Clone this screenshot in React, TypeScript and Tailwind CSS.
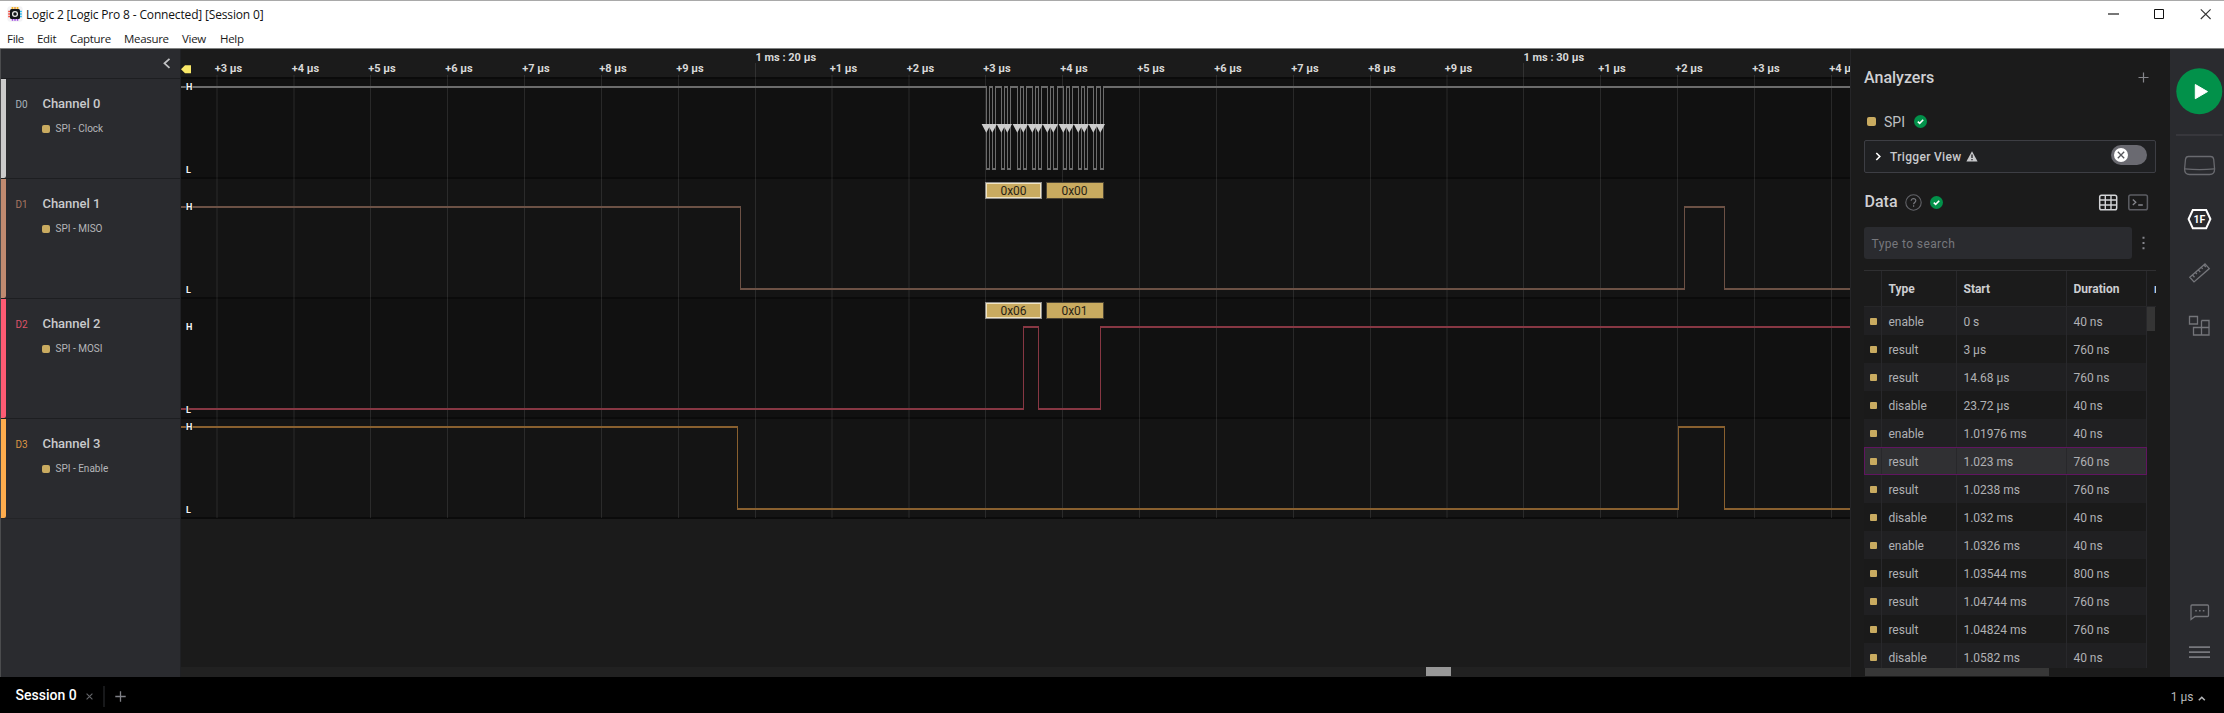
import React from "react";

const MENU = [
  { label: "File", w: "w-[30px]" },
  { label: "Edit", w: "w-[33px]" },
  { label: "Capture", w: "w-[54px]" },
  { label: "Measure", w: "w-[58px]" },
  { label: "View", w: "w-[38px]" },
  { label: "Help", w: "w-[40px]" },
];

const CHANNELS = [
  { id: "D0", name: "Channel 0", role: "SPI - Clock", h: "h-[100px]", bar: "bg-[#cbcbcb]", text: "text-[#a9b4bb]" },
  { id: "D1", name: "Channel 1", role: "SPI - MISO", h: "h-[120px]", bar: "bg-[#c08a70]", text: "text-[#a87661]" },
  { id: "D2", name: "Channel 2", role: "SPI - MOSI", h: "h-[120px]", bar: "bg-[#fd5b73]", text: "text-[#dd5368]" },
  { id: "D3", name: "Channel 3", role: "SPI - Enable", h: "h-[100px]", bar: "bg-[#feac4d]", text: "text-[#dc9545]" },
];

const GRID: { x: number; label: string; major?: boolean }[] = [
  { x: 217, label: "+3 µs" },
  { x: 294, label: "+4 µs" },
  { x: 370.5, label: "+5 µs" },
  { x: 447.5, label: "+6 µs" },
  { x: 524.5, label: "+7 µs" },
  { x: 601.5, label: "+8 µs" },
  { x: 678.5, label: "+9 µs" },
  { x: 755.5, label: "1 ms : 20 µs", major: true },
  { x: 832, label: "+1 µs" },
  { x: 909, label: "+2 µs" },
  { x: 985.5, label: "+3 µs" },
  { x: 1062.5, label: "+4 µs" },
  { x: 1139.5, label: "+5 µs" },
  { x: 1216.5, label: "+6 µs" },
  { x: 1293.5, label: "+7 µs" },
  { x: 1370.5, label: "+8 µs" },
  { x: 1447, label: "+9 µs" },
  { x: 1523.5, label: "1 ms : 30 µs", major: true },
  { x: 1600.5, label: "+1 µs" },
  { x: 1677.5, label: "+2 µs" },
  { x: 1754.5, label: "+3 µs" },
  { x: 1831.5, label: "+4 µs" },
];

const CLOCK = [
  16, 19, 22, 25, 31, 34, 37, 40, 47, 50, 53, 56, 62, 65, 68, 71, 77, 80, 83, 87, 93, 96, 99, 102, 108, 111, 114, 117,
  123, 126, 130, 133,
].map((v) => 970.5 + v);

const SIGNALS = [
  { high: 87, low: 169, start: true, color: "#6c6c6c", edges: CLOCK },
  { high: 207, low: 289, start: true, color: "#6c5145", edges: [740.5, 1684.5, 1724.5] },
  { high: 327, low: 409, start: false, color: "#873743", edges: [1023.5, 1038.5, 1100.5] },
  { high: 427, low: 509, start: true, color: "#89602f", edges: [737.5, 1678.5, 1724.5] },
];

const FRAMES = [
  { x: 985, y: 182, t: "0x00", sel: true },
  { x: 1046, y: 182, t: "0x00", sel: false },
  { x: 985, y: 302, t: "0x06", sel: true },
  { x: 1046, y: 302, t: "0x01", sel: false },
];

const ROWS = [
  ["enable", "0 s", "40 ns"],
  ["result", "3 µs", "760 ns"],
  ["result", "14.68 µs", "760 ns"],
  ["disable", "23.72 µs", "40 ns"],
  ["enable", "1.01976 ms", "40 ns"],
  ["result", "1.023 ms", "760 ns"],
  ["result", "1.0238 ms", "760 ns"],
  ["disable", "1.032 ms", "40 ns"],
  ["enable", "1.0326 ms", "40 ns"],
  ["result", "1.03544 ms", "800 ns"],
  ["result", "1.04744 ms", "760 ns"],
  ["result", "1.04824 ms", "760 ns"],
  ["disable", "1.0582 ms", "40 ns"],
];
const SELECTED = 5;

function Signal({ high, low, start, color, edges }: (typeof SIGNALS)[number]) {
  const levels: React.ReactNode[] = [];
  let x = 181;
  let up = start;
  [...edges, 1850].forEach((e, i) => {
    const left = i === 0 ? x : x - 0.5;
    const right = i === edges.length ? e : e + 0.5;
    levels.push(<rect key={i} x={left} y={(up ? high : low) - 1} width={right - left} height={2} fill={color} />);
    x = e;
    up = !up;
  });
  return (
    <g>
      {levels}
      {edges.map((e) => (
        <rect key={e} x={e - 0.5} y={high} width={1} height={low - high} fill={color} />
      ))}
    </g>
  );
}

function Plot() {
  return (
    <svg width="1669" height="628" viewBox="181 49 1669 628" className="block" fontFamily="Roboto, sans-serif">
      <rect x="181" y="49" width="1669" height="628" fill="#1b1b1b" />
      <rect x="181" y="78" width="1669" height="100" fill="#111111" />
      <rect x="181" y="178" width="1669" height="120" fill="#141414" />
      <rect x="181" y="298" width="1669" height="120" fill="#111111" />
      <rect x="181" y="418" width="1669" height="100" fill="#141414" />
      {[77, 177, 297, 417, 517].map((y) => (
        <rect key={y} x="181" y={y} width="1669" height="2" fill="#0b0b0b" />
      ))}
      {GRID.map((g) => (
        <rect key={g.x} x={g.x - 0.5} y={g.major ? 63 : 75} width={1} height={g.major ? 455 : 443} fill="#ffffff" fillOpacity={0.1} />
      ))}
      {GRID.map((g) => (
        <text key={g.x} x={g.major ? g.x : g.x - 2.3} y={g.major ? 60.5 : 72} fontSize="11" fontWeight="700" fill="#d8d8d8">
          {g.label}
        </text>
      ))}
      <path d="M181 69.3 L185 65.3 H191 V73.3 H185 Z" fill="#f8e767" />
      {SIGNALS.map((s) => (
        <Signal key={s.high} {...s} />
      ))}
      {CLOCK.filter((_, i) => i % 2 === 0).map((x) => (
        <path key={x} d={`M${x - 4.9} 124 h9.4 l-4.7 8.7 z`} fill="#cccccc" />
      ))}
      {FRAMES.map((f) => (
        <g key={`${f.x}-${f.y}`}>
          <rect x={f.x} y={f.y} width={f.sel ? 57 : 58} height="17" fill={f.sel ? "#8d8d8b" : "#4c4433"} />
          <rect x={f.x + 1} y={f.y + 1} width={f.sel ? 55 : 56} height="15" fill={f.sel ? "#f1e4c4" : "#c9ab60"} />
          {f.sel && <rect x={f.x + 2} y={f.y + 2} width="53" height="13" fill="#c9ab60" />}
          <text x={f.x + 28.5} y={f.y + 13} fontSize="12" textAnchor="middle" fill="#2a2415">
            {f.t}
          </text>
        </g>
      ))}
      {SIGNALS.map((s) => (
        <g key={s.high} fontSize="9" fontWeight="700" fill="#f6f6f6" stroke="#111111" strokeWidth="1.4" paintOrder="stroke">
          <text x="186" y={s.high + 3}>H</text>
          <text x="186" y={s.low + 4}>L</text>
        </g>
      ))}
      <rect x="181" y="667" width="1669" height="10" fill="#212121" />
      <rect x="1426" y="667" width="25" height="9" fill="#979797" />
    </svg>
  );
}

function AppIcon() {
  return (
    <svg width="16" height="16" viewBox="0 0 16 16" className="block">
      <rect x="0.3" y="0.3" width="15.4" height="15.4" rx="3" fill="#f3f3f5" />
      <path d="M5.5 1v3M10.5 1v3" stroke="#f5b51e" strokeWidth="1.8" />
      <path d="M8 1v3" stroke="#e98b2b" strokeWidth="1.4" />
      <path d="M5.5 12v2.7M8 12v2.7M10.5 12v2.7" stroke="#9b3fe0" strokeWidth="1.5" />
      <path d="M1.2 5.5h3M1.2 8h3M1.2 10.5h3" stroke="#ee4a3c" strokeWidth="1.5" />
      <path d="M12 5.5h2.8M12 8h2.8M12 10.5h2.8" stroke="#25b5ea" strokeWidth="1.5" />
      <rect x="3" y="3" width="10" height="10" rx="1.5" fill="#15171c" />
      <circle cx="8" cy="8" r="2.4" fill="none" stroke="#e8e8e8" strokeWidth="1.3" />
    </svg>
  );
}

function Check() {
  return (
    <svg width="13" height="13" viewBox="0 0 13 13" className="block shrink-0">
      <circle cx="6.5" cy="6.5" r="6.5" fill="#02914a" />
      <path d="M3.8 6.6 L5.7 8.4 L9.2 4.8" fill="none" stroke="#fff" strokeWidth="1.6" />
    </svg>
  );
}

function AnalyzerPanel() {
  return (
    <section className="flex w-[320px] shrink-0 flex-col border-l border-[#252527] bg-[#1b1b1b] pl-[13px]">
      <div className="flex h-[57px] w-[284px] items-center justify-between">
        <h2 className="text-[16px] font-medium leading-none text-[#cfd0d3]">Analyzers</h2>
        <svg width="11" height="11" viewBox="0 0 11 11" className="mr-[-1px]">
          <path d="M5.5 0.5v10M0.5 5.5h10" stroke="#85868b" strokeWidth="1.2" />
        </svg>
      </div>
      <div className="flex h-[34px] items-center pb-[3px] pl-[3px]">
        <span className="h-[9px] w-[9px] rounded-[2px] bg-[#c9ab60]" />
        <span className="ml-[8px] w-[30px] text-[14px] leading-none text-[#bfc0c3]">SPI</span>
        <Check />
      </div>
      <div className="flex h-[33px] w-[292px] items-center rounded-[2px] border border-[#3d3e44] bg-[#1f2022] pl-[10px] pr-[8px]">
        <svg width="7" height="9" viewBox="0 0 7 9" className="mr-[8px]">
          <path d="M1.3 1 L4.8 4.5 L1.3 8" fill="none" stroke="#fff" strokeWidth="1.6" />
        </svg>
        <span className="text-[12px] font-medium leading-none tracking-[0.32px] text-[#c8c9cc]">Trigger View</span>
        <svg width="12" height="11" viewBox="0 0 12 11" className="ml-[4.5px]">
          <path d="M6 0.3 L11.6 10.4 H0.4 Z" fill="#c8c9cc" />
          <path d="M6 3.6v3.4M6 7.9v1.4" stroke="#1f2022" strokeWidth="1.3" />
        </svg>
        <span className="mb-[3px] ml-auto flex h-[20px] w-[36px] items-center rounded-full bg-[#6a6a71] pl-[3px]">
          <svg width="14" height="14" viewBox="0 0 14 14">
            <circle cx="7" cy="7" r="7" fill="#fff" />
            <path d="M3.8 3.8 L10.2 10.2 M10.2 3.8 L3.8 10.2" stroke="#55565b" strokeWidth="1.3" />
          </svg>
        </span>
      </div>
      <div className="flex h-[54px] items-center pt-[4px]">
        <h2 className="w-[41px] pl-[0.5px] text-[16px] font-medium leading-none text-[#cfd0d3]">Data</h2>
        <svg width="17" height="17" viewBox="0 0 17 17" className="mr-[7.5px]">
          <circle cx="8.5" cy="8.5" r="7.7" fill="none" stroke="#626368" strokeWidth="1.1" />
          <path d="M6.2 6.8 C6.2 3.8 10.9 3.9 10.8 6.8 C10.7 8.4 8.6 8.5 8.6 10.2 M8.6 11.3v1.4" fill="none" stroke="#77787d" strokeWidth="1.2" />
        </svg>
        <Check />
        <svg width="20" height="17" viewBox="0 0 20 17" className="ml-[155.5px]">
          <rect x="1.7" y="1.2" width="17" height="14.6" rx="1.8" fill="none" stroke="#d2d3d6" strokeWidth="1.5" />
          <path d="M1.5 6h17M1.5 11h17M7.3 1v15M13 1v15" stroke="#d2d3d6" strokeWidth="1.4" />
        </svg>
        <svg width="21" height="17" viewBox="0 0 21 17" className="ml-[10px]">
          <rect x="0.8" y="1" width="18.6" height="14.8" rx="1.8" fill="none" stroke="#5c5d63" strokeWidth="1.5" />
          <path d="M4.8 5.5 L7.8 8.3 L4.8 11 M10.2 11h4.6" fill="none" stroke="#85868c" strokeWidth="1.3" />
        </svg>
      </div>
      <div className="flex h-[32px] items-center">
        <div className="flex h-[32px] w-[268px] items-center rounded-[3px] bg-[#2a2b2f] pl-[7.5px] pt-px text-[12px] tracking-[0.4px] text-[#77787d]">
          Type to search
        </div>
        <svg width="3" height="14" viewBox="0 0 3 14" className="ml-[10px]">
          <path d="M0.5 0.7h2v2h-2zM0.5 6h2v2h-2zM0.5 11.3h2v2h-2z" fill="#85868c" />
        </svg>
      </div>
      <div className="mt-[11px] flex h-[407px] w-[292px] flex-col border-t border-[#2f2f31]">
        <div className="flex h-[36px] shrink-0 overflow-hidden border-b border-[#262628] text-[12px] font-bold text-[#cdced1]">
          <span className="w-[18px] shrink-0 border-r border-[#28282b]" />
          <span className="flex w-[75px] shrink-0 items-center border-r border-[#28282b] pl-[6.5px]">Type</span>
          <span className="flex w-[110px] shrink-0 items-center border-r border-[#28282b] pl-[6.5px]">Start</span>
          <span className="flex w-[80px] shrink-0 items-center border-r border-[#28282b] pl-[6.5px]">Duration</span>
          <span className="flex shrink-0 items-center pl-[7px]">mosi</span>
        </div>
        <div className="flex h-[361px] shrink-0">
          <div className="h-[361px] w-[283px] overflow-hidden">
            {ROWS.map((r, i) => (
              <div
                key={i}
                className={
                  "flex h-[28px] text-[12px] text-[#b0b1b4] " +
                  (i === SELECTED
                    ? "bg-[#303033] outline outline-1 -outline-offset-1 outline-[#601560]"
                    : i % 2 === 0
                      ? "bg-[#202022]"
                      : "bg-[#1a1a1a]")
                }
              >
                <span className="flex w-[18px] items-center border-r border-[#28282b] pl-[6px]">
                  <span className="h-[7px] w-[7px] shrink-0 rounded-[1px] bg-[#c9ab60]" />
                </span>
                <span className="flex w-[75px] items-center border-r border-[#28282b] pl-[6.4px] pt-px">{r[0]}</span>
                <span className="flex w-[110px] items-center border-r border-[#28282b] pl-[6.4px] pt-px">{r[1]}</span>
                <span className="flex w-[80px] items-center border-r border-[#28282b] pl-[6.4px] pt-px">{r[2]}</span>
              </div>
            ))}
          </div>
          <div className="h-[24px] w-[8px] bg-[#353535]" />
        </div>
        <div className="ml-px h-[8px] w-[184px] shrink-0 bg-[#373737]" />
      </div>
    </section>
  );
}

function Rail() {
  return (
    <aside className="h-[628px] w-[54px] shrink-0 bg-[#2a2b2f]">
      <svg width="54" height="628" viewBox="2170 49 54 628" fill="none" stroke="#74757a" strokeWidth="1.3" className="block">
        <circle cx="2199.3" cy="91.3" r="23" fill="#02914a" stroke="none" />
        <path d="M2195.3 84.5 L2207.5 91.6 L2195.3 98.7 Z" fill="#fff" stroke="#fff" strokeWidth="1" strokeLinejoin="round" />
        <path d="M2176 135h46.5" stroke="#3c3d42" strokeWidth="1.6" />
        <path d="M2188.5 156.5h22q2.8 0 3.2 2.8l.9 9.7q0 5.5-5 5.5h-20q-5 0-5-5.5l.9-9.7q.4-2.8 3-2.8z" stroke="#696a6f" />
        <path d="M2185 168.8q14.5 1.6 29.2 0" stroke="#696a6f" />
        <path d="M2192.8 210h13.4l4.2 9.1-4.2 9.1h-13.4l-4.2-9.1z" stroke="#fff" strokeWidth="2" />
        <text x="2199.4" y="223" fontFamily="Roboto, sans-serif" fontSize="10.5" fontWeight="700" fill="#fff" stroke="none" textAnchor="middle">1F</text>
        <path d="M2189.8 277.2 L2205 263.9 L2209.3 268.6 L2194 281.9 Z M2192.5 275l2 2.2M2195.4 272.4l1.5 1.6M2198.3 269.9l2 2.2M2201.2 267.3l1.5 1.6M2204 265l1.8 2" />
        <path d="M2189.5 316.5h8v7.5h-8zM2201.5 320.5h7.5v14.5h-15.5v-7.5h15.5M2201.5 327.5v7.5M2201.5 320.5v7.5" />
        <path d="M2191 619.5 V606 q0-1 1-1 h15.5 q1 0 1 1 v9.5 q0 1-1 1 H2195 Z" />
        <path d="M2195.2 610.7h1.6M2199 610.7h1.6M2202.8 610.7h1.6" strokeWidth="1.6" />
        <path d="M2189 647.2h21M2189 652.2h21M2189 657.2h21" stroke="#77787d" strokeWidth="1.7" />
      </svg>
    </aside>
  );
}

export default function App() {
  return (
    <div className="flex h-[713px] w-[2224px] flex-col overflow-hidden bg-black font-[Roboto,sans-serif]">
      <header className="h-[49px] shrink-0 border-b border-t border-b-[#808282] border-t-[#a9a9a9] bg-white font-['Open_Sans','Noto_Sans',sans-serif] text-[#1a1a1a]">
        <div className="flex h-[29px]">
          <div className="flex flex-1 pl-[7px] pt-[5px]">
            <AppIcon />
            <span className="ml-[3px] mt-[-1px] whitespace-nowrap text-[12px] leading-[20px] tracking-[-0.16px] text-[#111]">
              Logic 2 [Logic Pro 8 - Connected] [Session 0]
            </span>
          </div>
          <svg width="124" height="29" viewBox="2100 1 124 29" fill="none">
            <path d="M2108 14h11" stroke="#777" strokeWidth="2" />
            <path d="M2154.5 9.5h9v9h-9z" stroke="#111" />
            <path d="M2200.8 9.3 L2210.6 19 M2210.6 9.3 L2200.8 19" stroke="#333" strokeWidth="1.1" />
          </svg>
        </div>
        <nav className="flex pl-[7px] text-[11.5px] leading-[17px] tracking-[-0.3px]">
          {MENU.map((m) => (
            <span key={m.label} className={m.w}>{m.label}</span>
          ))}
        </nav>
      </header>
      <main className="flex h-[628px] shrink-0">
        <aside className="flex w-[181px] shrink-0 flex-col border-l border-r border-l-[#4b4c4e] border-r-[#202124] bg-[#2a2b2f]">
          <div className="flex h-[29px] items-center justify-end pr-[9px]">
            <svg width="8" height="11" viewBox="0 0 8 11">
              <path d="M6.5 0.8 L1.5 5.3 L6.5 9.8" fill="none" stroke="#c0c1c3" strokeWidth="1.8" />
            </svg>
          </div>
          {CHANNELS.map((c) => (
            <div key={c.id} className={"flex border-t border-[#1d1e21] " + c.h}>
              <span className={"w-[5px] rounded-br-[2px] " + c.bar} />
              <span className={"w-[36px] pl-[9.5px] pt-[20px] text-[10px] leading-[12px] " + c.text}>{c.id}</span>
              <div>
                <div className="pl-[0.4px] pt-[17px] text-[13px] font-medium leading-[16px] text-[#c9cacc]">{c.name}</div>
                <div className="flex items-center pt-[10px] text-[10px] leading-[13px] text-[#b5b6b9]">
                  <span className="mr-[5.5px] h-[8px] w-[8px] shrink-0 rounded-[2px] bg-[#c9ab60]" />
                  {c.role}
                </div>
              </div>
            </div>
          ))}
          <div className="border-t border-[#232427]" />
        </aside>
        <Plot />
        <AnalyzerPanel />
        <Rail />
      </main>
      <footer className="flex h-[36px] shrink-0 items-center bg-black pl-[15.5px] pr-[18px]">
        <span className="w-[70px] text-[14px] font-medium leading-none text-white">Session 0</span>
        <svg width="7" height="7" viewBox="0 0 7 7" className="mt-[2px]">
          <path d="M0.6 0.6l5.8 5.8M6.4 0.6l-5.8 5.8" stroke="#65666a" strokeWidth="1.1" />
        </svg>
        <span className="ml-[10px] mt-[2px] h-[21px] w-[2px] bg-[#17181a]" />
        <svg width="11" height="11" viewBox="0 0 11 11" className="ml-[10px] mt-[2px]">
          <path d="M5.5 0.3v10.4M0.3 5.5h10.4" stroke="#808187" strokeWidth="1.3" />
        </svg>
        <span className="ml-auto mt-[3px] text-[12px] leading-none text-[#b7b8bb]">1 µs</span>
        <svg width="8" height="5" viewBox="0 0 8 5" className="ml-[4.5px] mt-[6px]">
          <path d="M0.8 4.2 L3.8 1.2 L6.8 4.2" fill="none" stroke="#b7b8bb" strokeWidth="1.5" />
        </svg>
      </footer>
    </div>
  );
}
